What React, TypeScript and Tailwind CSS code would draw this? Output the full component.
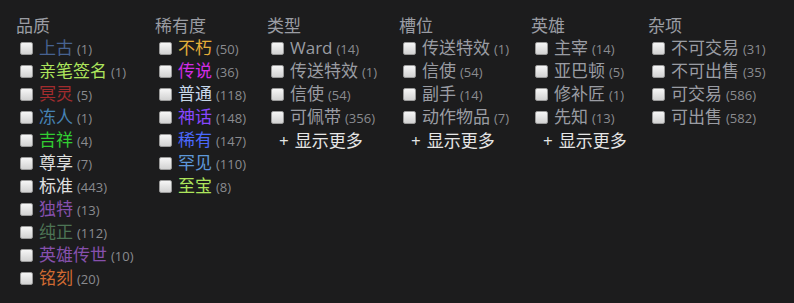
import React from "react";

interface Option {
  label: string;
  count: number;
  color?: string;
}

interface Group {
  title: string;
  width: string;
  options: Option[];
  more?: boolean;
}

const groups: Group[] = [
  {
    title: "品质",
    width: "w-[139px]",
    options: [
      { label: "上古", count: 1, color: "text-[#476291]" },
      { label: "亲笔签名", count: 1, color: "text-[#ade55c]" },
      { label: "冥灵", count: 5, color: "text-[#a32c2e]" },
      { label: "冻人", count: 1, color: "text-[#4682b4]" },
      { label: "吉祥", count: 4, color: "text-[#32cd32]" },
      { label: "尊享", count: 7, color: "text-[#e0e0e0]" },
      { label: "标准", count: 443, color: "text-[#e0e0e0]" },
      { label: "独特", count: 13, color: "text-[#8650ac]" },
      { label: "纯正", count: 112, color: "text-[#4d7455]" },
      { label: "英雄传世", count: 10, color: "text-[#8650ac]" },
      { label: "铭刻", count: 20, color: "text-[#cf6a32]" },
    ],
  },
  {
    title: "稀有度",
    width: "w-[112px]",
    options: [
      { label: "不朽", count: 50, color: "text-[#e4ae39]" },
      { label: "传说", count: 36, color: "text-[#d32ce6]" },
      { label: "普通", count: 118, color: "text-[#c8d8ea]" },
      { label: "神话", count: 148, color: "text-[#8847ff]" },
      { label: "稀有", count: 147, color: "text-[#4b69ff]" },
      { label: "罕见", count: 110, color: "text-[#5e98d9]" },
      { label: "至宝", count: 8, color: "text-[#ade55c]" },
    ],
  },
  {
    title: "类型",
    width: "w-[132px]",
    more: true,
    options: [
      { label: "Ward", count: 14 },
      { label: "传送特效", count: 1 },
      { label: "信使", count: 54 },
      { label: "可佩带", count: 356 },
    ],
  },
  {
    title: "槽位",
    width: "w-[132px]",
    more: true,
    options: [
      { label: "传送特效", count: 1 },
      { label: "信使", count: 54 },
      { label: "副手", count: 14 },
      { label: "动作物品", count: 7 },
    ],
  },
  {
    title: "英雄",
    width: "w-[117px]",
    more: true,
    options: [
      { label: "主宰", count: 14 },
      { label: "亚巴顿", count: 5 },
      { label: "修补匠", count: 1 },
      { label: "先知", count: 13 },
    ],
  },
  {
    title: "杂项",
    width: "w-[140px]",
    options: [
      { label: "不可交易", count: 31 },
      { label: "不可出售", count: 35 },
      { label: "可交易", count: 586 },
      { label: "可出售", count: 582 },
    ],
  },
];

const Box = () => (
  <span className="w-[13px] h-[13px] shrink-0 rounded-[2px] border border-[#9a9a9a] bg-gradient-to-b from-[#f6f6f6] to-[#d2d2d2]" />
);

const App = () => {
  return (
    <div
      className="w-[794px] h-[303px] bg-[#1c1c1d] pl-4 pt-[14px] flex"
      style={{ fontFamily: '"Open Sans", "Noto Sans CJK SC", sans-serif' }}
    >
      {groups.map((group) => (
        <div key={group.title} className={`${group.width} flex flex-col`}>
          <div className="text-[17px] leading-[23px] text-[#9a9ca3]">{group.title}</div>
          {group.options.map((opt) => (
            <label key={opt.label} className="flex items-center h-[23px] pl-1 gap-[6px]">
              <Box />
              <span className={`text-[17px] leading-[23px] whitespace-nowrap ${opt.color ?? "text-[#9a9ca3]"}`}>
                {opt.label}
                <span className="text-[13px] text-[#8a8b8f] ml-1">({opt.count})</span>
              </span>
            </label>
          ))}
          {group.more && (
            <div className="h-[23px] flex items-center pl-[12px] text-[17px] text-[#e6e6e6]">
              <span className="mr-[6px]">+</span>显示更多
            </div>
          )}
        </div>
      ))}
    </div>
  );
};

export default App;
